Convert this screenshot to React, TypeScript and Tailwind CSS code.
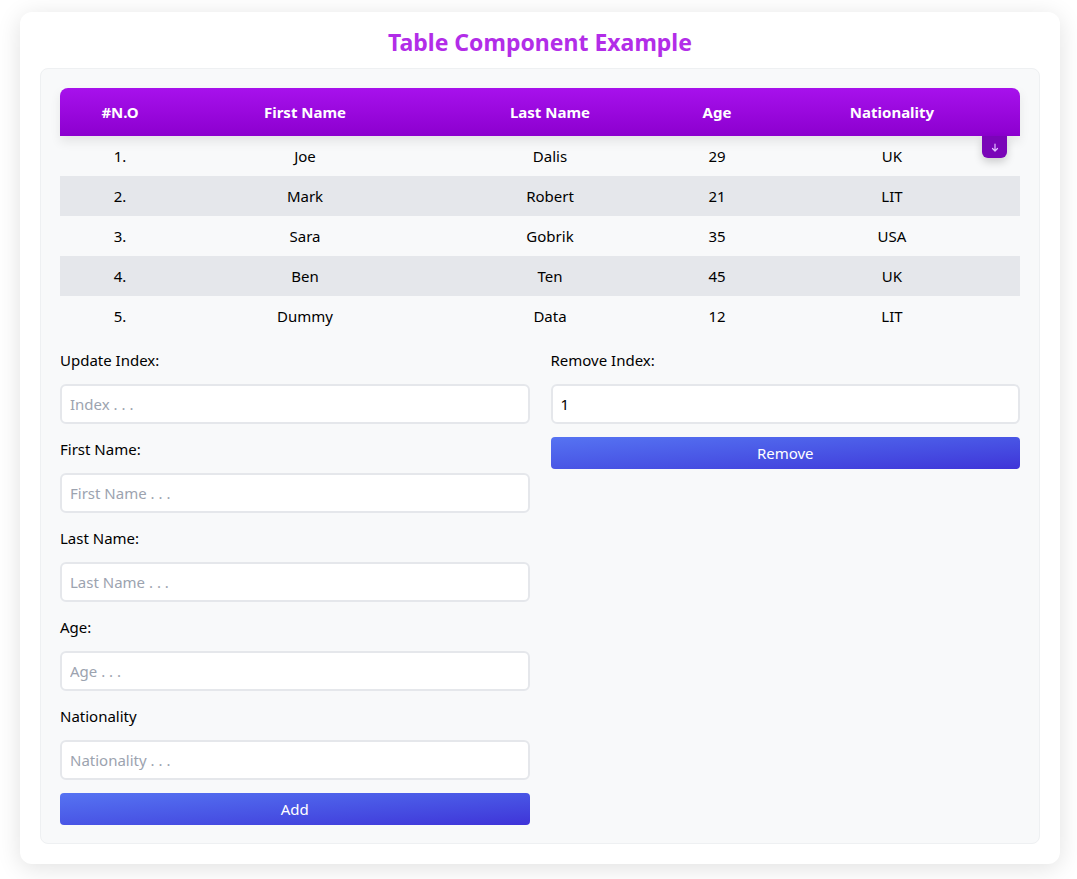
import { useState } from "react";

type Person = {
    firstName: string,
    lastName: string,
    age: number,
    nationality: string,
}

const people: Person[] = [
    { firstName: "Joe", lastName: "Dalis", age: 29, nationality: "UK" },
    { firstName: "Mark", lastName: "Robert", age: 21, nationality: "LIT" },
    { firstName: "Sara", lastName: "Gobrik", age: 35, nationality: "USA" },
    { firstName: "Ben", lastName: "Ten", age: 45, nationality: "UK" },
    { firstName: "Dummy", lastName: "Data", age: 12, nationality: "LIT" },
];

const Field = ({ label, placeholder, value }: { label: string, placeholder: string, value?: string }) => {
    return (
        <div className="flex flex-col">
            <label className="text-[15px] leading-[22px] text-black">{label}</label>
            <input
                defaultValue={value}
                placeholder={placeholder}
                className="mt-[13px] h-10 rounded-md border-2 border-[#e5e7eb] bg-white px-2 text-[15px] text-black placeholder:text-[#9ca3af] outline-none"
            />
        </div>
    );
};

const App = () => {
    const [rows] = useState(people);

    return (
        <div className="min-h-[879px] bg-white pt-3 pl-5 font-['Noto_Sans',sans-serif]">
            <div className="w-[1040px] rounded-xl bg-white px-5 pt-[14px] pb-5 shadow-[0_4px_24px_rgba(0,0,0,0.12)]">
                <h1 className="text-center text-[23px] leading-8 font-bold text-[#b22de8]">Table Component Example</h1>

                <div className="mt-[10px] rounded-lg border border-[#eef0f2] bg-[#f8f9fa] px-[19px] pt-[19px] pb-[18px]">
                    <div className="relative">
                        <table className="w-full border-collapse text-[15px] text-black">
                            <thead>
                                <tr className="h-12 bg-gradient-to-b from-[#a711ec] to-[#8c00cf] text-white shadow-[0_6px_10px_rgba(0,0,0,0.08)]">
                                    <th className="w-[120px] rounded-tl-lg font-bold">#N.O</th>
                                    <th className="w-[250px] font-bold">First Name</th>
                                    <th className="w-[240px] font-bold">Last Name</th>
                                    <th className="w-[94px] font-bold">Age</th>
                                    <th className="rounded-tr-lg font-bold">Nationality</th>
                                </tr>
                            </thead>
                            <tbody>
                                {rows.map((row, index) => (
                                    <tr key={index} className={`h-10 text-center ${index % 2 === 1 ? "bg-[#e5e7eb]" : ""}`}>
                                        <td>{index + 1}.</td>
                                        <td>{row.firstName}</td>
                                        <td>{row.lastName}</td>
                                        <td>{row.age}</td>
                                        <td>{row.nationality}</td>
                                    </tr>
                                ))}
                            </tbody>
                        </table>
                        <button className="absolute top-12 right-[13px] flex h-[22px] w-[25px] items-center justify-center rounded-b-md bg-[#7a05b8] shadow-[0_4px_8px_rgba(0,0,0,0.18)]">
                            <svg width="8" height="9" viewBox="0 0 8 9" fill="none" stroke="#e2c4ff" strokeWidth="1.2" strokeLinecap="round" strokeLinejoin="round">
                                <path d="M4 1v7M1.5 5.5 4 8l2.5-2.5" />
                            </svg>
                        </button>
                    </div>

                    <div className="mt-[13px] grid grid-cols-2 gap-x-[21px]">
                        <div className="flex flex-col gap-[14px]">
                            <Field label="Update Index:" placeholder="Index . . ." />
                            <Field label="First Name:" placeholder="First Name . . ." />
                            <Field label="Last Name:" placeholder="Last Name . . ." />
                            <Field label="Age:" placeholder="Age . . ." />
                            <Field label="Nationality" placeholder="Nationality . . ." />
                            <button className="-mt-[1px] h-8 rounded bg-gradient-to-br from-[#5673f2] to-[#3f33d8] text-[15px] text-white">Add</button>
                        </div>
                        <div className="flex flex-col gap-[13px] self-start">
                            <Field label="Remove Index:" placeholder="" value="1" />
                            <button className="h-8 rounded bg-gradient-to-br from-[#5673f2] to-[#3f33d8] text-[15px] text-white">Remove</button>
                        </div>
                    </div>
                </div>
            </div>
        </div>
    );
};

export default App;
